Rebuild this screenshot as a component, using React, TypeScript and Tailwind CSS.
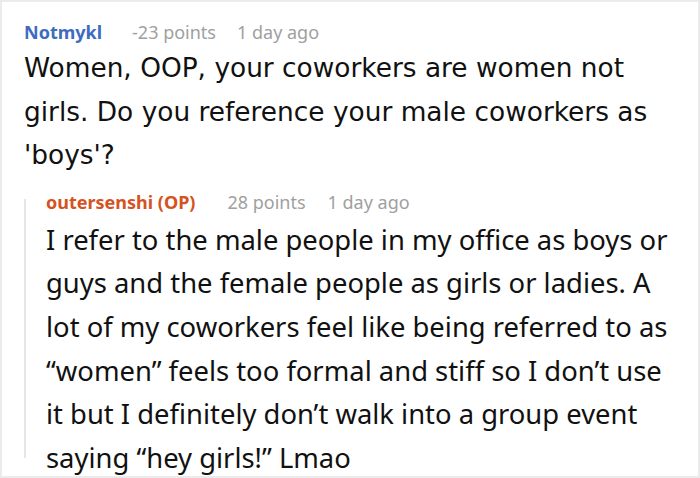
const noto = { fontFamily: '"Noto Sans", "Open Sans", sans-serif' };
const wide = { fontFamily: '"DejaVu Sans", "Noto Sans", sans-serif' };

function Meta({ name, points, time, nameClass, gap1, gap2 }: { name: string; points: string; time: string; nameClass: string; gap1: string; gap2: string }) {
  return (
    <div className="flex items-baseline text-[18px] leading-6">
      <span className={`font-bold ${nameClass}`}>{name}</span>
      <span className={`${gap1} text-[#a0a0a0]`}>{points}</span>
      <span className={`${gap2} text-[#a0a0a0]`}>{time}</span>
    </div>
  );
}

const topLines = [
  'Women, OOP, your coworkers are women not',
  'girls. Do you reference your male coworkers as',
  "'boys'?",
];

const replyLines = [
  'I refer to the male people in my office as boys or',
  'guys and the female people as girls or ladies. A',
  'lot of my coworkers feel like being referred to as',
  '“women” feels too formal and stiff so I don’t use',
  'it but I definitely don’t walk into a group event',
  'saying “hey girls!” Lmao',
];

export default function App() {
  return (
    <div
      className="h-[478px] w-[700px] overflow-hidden border-2 border-[#ebebeb] bg-white text-[#111]"
      style={noto}
    >
      <div className="pl-[22px] pt-[18px]">
        <Meta name="Notmykl" points="-23 points" time="1 day ago" nameClass="text-[#3d6cc0]" gap1="ml-[30px]" gap2="ml-[21px]" />
        <div className="mt-[2px] text-[26.4px] leading-[43.5px]" style={wide}>
          {topLines.map((l) => (
            <div key={l} className="whitespace-nowrap">{l}</div>
          ))}
        </div>
        <div className="mt-[13px] flex">
          <div className="mt-[9px] mb-[22px] w-[2px] shrink-0 bg-[#e6e6e6]" />
          <div className="pl-[20px]">
            <Meta name="outersenshi (OP)" points="28 points" time="1 day ago" nameClass="text-[#d4531f]" gap1="ml-[32px]" gap2="ml-[22px]" />
            <div className="mt-[4px] text-[27.4px] leading-[43.7px]">
              {replyLines.map((l) => (
                <div key={l} className="whitespace-nowrap">{l}</div>
              ))}
            </div>
          </div>
        </div>
      </div>
    </div>
  );
}
